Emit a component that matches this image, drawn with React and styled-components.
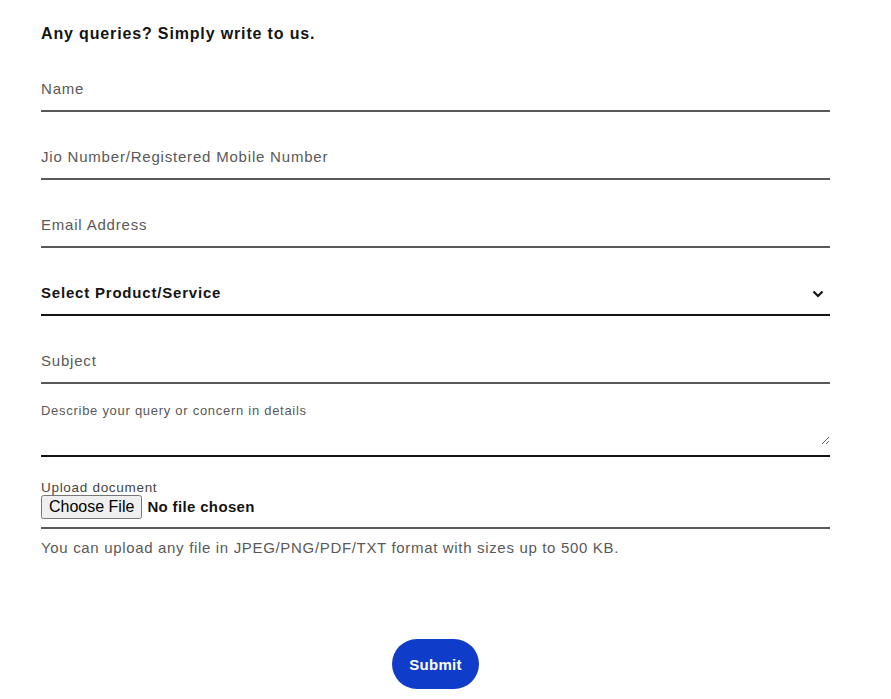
import styled, { createGlobalStyle } from 'styled-components';

const GlobalStyle = createGlobalStyle`
    body {
        margin: 0;
        background: #fff;
        font-family: "Liberation Sans", Arial, sans-serif;
    }
`;

const Page = styled.div`
    width: 789px;
    padding: 25px 0 10px 41px;
`;

const Heading = styled.h2`
    margin: 0;
    font-size: 16px;
    line-height: 18px;
    font-weight: bold;
    letter-spacing: 0.85px;
    color: #141414;
`;

const Form = styled.form`
    display: flex;
    flex-direction: column;
`;

const Field = styled.div`
    position: relative;
    display: flex;
    flex-direction: column;
    justify-content: flex-end;
    height: ${(p) => p.$height || 66}px;
    border-bottom: 2px solid ${(p) => (p.$dark ? '#141414' : '#595959')};
`;

const TextInput = styled.input`
    border: none;
    outline: none;
    height: 44px;
    padding: 0;
    font-family: inherit;
    font-size: 15px;
    letter-spacing: 0.8px;
    color: #141414;
    background: transparent;

    &::placeholder {
        color: #595959;
    }
`;

const Select = styled.select`
    appearance: none;
    border: none;
    outline: none;
    height: 44px;
    padding: 0;
    font-family: inherit;
    font-size: 15px;
    font-weight: bold;
    letter-spacing: 0.8px;
    color: #141414;
    background: transparent;
`;

const Chevron = styled.svg`
    position: absolute;
    right: 6px;
    bottom: 16px;
    pointer-events: none;
`;

const SmallLabel = styled.label`
    font-size: 13px;
    line-height: 15px;
    letter-spacing: 0.72px;
    color: #595959;
`;

const TextArea = styled.textarea`
    border: none;
    outline: none;
    padding: 0;
    height: 27px;
    margin-bottom: 10px;
    font-family: inherit;
    font-size: 15px;
    background: transparent;
`;

const UploadField = styled.div`
    display: flex;
    flex-direction: column;
    padding-top: 23px;
    padding-bottom: 8px;
    border-bottom: 2px solid #595959;
`;

const UploadLabel = styled.label`
    font-size: 13.5px;
    line-height: 15px;
    letter-spacing: 0.7px;
    color: #444;
`;

const FileInput = styled.input`
    font-family: inherit;
    font-size: 15px;
    font-weight: bold;
    letter-spacing: 0.35px;
    color: #141414;

    &::file-selector-button {
        font-family: inherit;
        font-size: 16px;
        font-weight: normal;
        letter-spacing: normal;
        padding: 1px 6px;
        margin-right: 5px;
    }
`;

const Hint = styled.p`
    margin: 10px 0 0;
    font-size: 15px;
    line-height: 18px;
    letter-spacing: 0.67px;
    color: #595959;
`;

const ButtonRow = styled.div`
    display: flex;
    justify-content: center;
    margin-top: 82px;
`;

const Submit = styled.button`
    width: 87px;
    height: 50px;
    border: none;
    border-radius: 25px;
    background: #0f3cc9;
    color: #fff;
    font-family: inherit;
    font-size: 15px;
    font-weight: bold;
    letter-spacing: 0.3px;
    cursor: pointer;
`;

const App = () => {
    return (
        <>
            <GlobalStyle />
            <Page>
                <Heading>Any queries? Simply write to us.</Heading>
                <Form onSubmit={(e) => e.preventDefault()}>
                    <Field $height={67}>
                        <TextInput placeholder="Name" />
                    </Field>
                    <Field>
                        <TextInput placeholder="Jio Number/Registered Mobile Number" />
                    </Field>
                    <Field>
                        <TextInput placeholder="Email Address" />
                    </Field>
                    <Field $dark>
                        <Select defaultValue="">
                            <option value="">Select Product/Service</option>
                            <option>JioFiber</option>
                            <option>Jio Mobile</option>
                        </Select>
                        <Chevron width="12" height="8" viewBox="0 0 12 8">
                            <path d="M1.5 1.5 L6 6 L10.5 1.5" fill="none" stroke="#141414" strokeWidth="2.2" />
                        </Chevron>
                    </Field>
                    <Field>
                        <TextInput placeholder="Subject" />
                    </Field>
                    <Field $dark $height={71}>
                        <SmallLabel>Describe your query or concern in details</SmallLabel>
                        <TextArea />
                    </Field>
                    <UploadField>
                        <UploadLabel>Upload document</UploadLabel>
                        <FileInput type="file" />
                    </UploadField>
                    <Hint>You can upload any file in JPEG/PNG/PDF/TXT format with sizes up to 500 KB.</Hint>
                    <ButtonRow>
                        <Submit type="submit">Submit</Submit>
                    </ButtonRow>
                </Form>
            </Page>
        </>
    );
};

export default App;
